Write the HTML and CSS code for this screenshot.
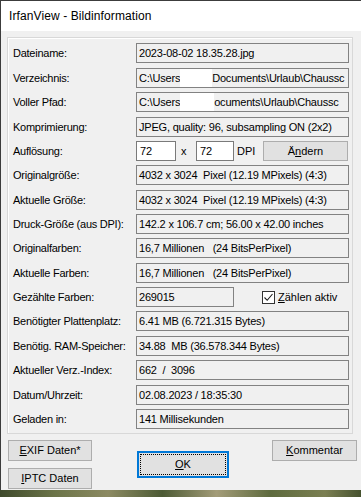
FILE: index.html
```html
<!DOCTYPE html>
<html lang="de">
<head>
    <meta charset="UTF-8">
    <meta name="viewport" content="width=device-width, initial-scale=1.0">
    <title>IrfanView - Bildinformation</title>
    <link rel="stylesheet" href="styles.css">
</head>

<body>
    <div class="window">
        <div class="titlebar">IrfanView - Bildinformation</div>
        <div class="dialog">
            <div class="frame">
                <div class="row">
                    <span class="label">Dateiname:</span>
                    <span class="field">2023-08-02 18.35.28.jpg</span>
                </div>
                <div class="row">
                    <span class="label">Verzeichnis:</span>
                    <span class="field">C:\Users<span class="hidden"></span>Documents\Urlaub\Chaussc</span>
                </div>
                <div class="row">
                    <span class="label">Voller Pfad:</span>
                    <span class="field">C:\Users<span class="hidden wide"></span>ocuments\Urlaub\Chaussc</span>
                </div>
                <div class="row">
                    <span class="label">Komprimierung:</span>
                    <span class="field">JPEG, quality: 96, subsampling ON (2x2)</span>
                </div>
                <div class="row">
                    <span class="label">Auflösung:</span>
                    <div class="dpi">
                        <span class="input">72</span>
                        <span class="times">x</span>
                        <span class="input">72</span>
                        <span class="unit">DPI</span>
                        <span class="button">Ä<u>n</u>dern</span>
                    </div>
                </div>
                <div class="row">
                    <span class="label">Originalgröße:</span>
                    <span class="field">4032 x 3024&nbsp; Pixel (12.19 MPixels) (4:3)</span>
                </div>
                <div class="row">
                    <span class="label">Aktuelle Größe:</span>
                    <span class="field">4032 x 3024&nbsp; Pixel (12.19 MPixels) (4:3)</span>
                </div>
                <div class="row">
                    <span class="label">Druck-Größe (aus DPI):</span>
                    <span class="field">142.2 x 106.7 cm; 56.00 x 42.00 inches</span>
                </div>
                <div class="row">
                    <span class="label">Originalfarben:</span>
                    <span class="field">16,7 Millionen&nbsp;&nbsp; (24 BitsPerPixel)</span>
                </div>
                <div class="row">
                    <span class="label">Aktuelle Farben:</span>
                    <span class="field">16,7 Millionen&nbsp;&nbsp; (24 BitsPerPixel)</span>
                </div>
                <div class="row">
                    <span class="label">Gezählte Farben:</span>
                    <div class="count">
                        <span class="field short">269015</span>
                        <span class="checkbox">
                            <svg width="11" height="11" viewBox="0 0 11 11">
                                <path d="M1.5 5.5 L4.2 8.3 L9.5 2" fill="none" stroke="#1a1a1a" stroke-width="1.1"/>
                            </svg>
                        </span>
                        <span class="check-label"><u>Z</u>ählen aktiv</span>
                    </div>
                </div>
                <div class="row">
                    <span class="label">Benötigter Plattenplatz:</span>
                    <span class="field">6.41 MB (6.721.315 Bytes)</span>
                </div>
                <div class="row">
                    <span class="label">Benötig. RAM-Speicher:</span>
                    <span class="field">34.88&nbsp; MB (36.578.344 Bytes)</span>
                </div>
                <div class="row">
                    <span class="label">Aktueller Verz.-Index:</span>
                    <span class="field">662&nbsp; /&nbsp; 3096</span>
                </div>
                <div class="row">
                    <span class="label">Datum/Uhrzeit:</span>
                    <span class="field">02.08.2023 / 18:35:30</span>
                </div>
                <div class="row">
                    <span class="label">Geladen in:</span>
                    <span class="field">141 Millisekunden</span>
                </div>
            </div>

            <div class="actions">
                <div class="side">
                    <span class="button small"><u>E</u>XIF Daten*</span>
                    <span class="button small"><u>I</u>PTC Daten</span>
                </div>
                <span class="button ok"><u>O</u>K</span>
                <span class="button small comment"><u>K</u>ommentar</span>
            </div>
        </div>
    </div>
    <div class="backdrop"></div>
</body>

</html>
```

FILE: styles.css
```css
* {
    margin: 0;
    padding: 0;
    box-sizing: border-box;
}

body {
    width: 361px;
    height: 497px;
    overflow: hidden;
    background-color: #f0f0f0;
    font-family: "Liberation Sans", Arial, sans-serif;
    font-size: 11px;
    color: #000;
}

.window {
    border-top: 1px solid #3c3c3c;
    border-left: 1px solid #3c3c3c;
    height: 490px;
}

.titlebar {
    height: 30px;
    line-height: 30px;
    padding-left: 8px;
    background-color: #fff;
    font-size: 12px;
    letter-spacing: 0.1px;
}

.dialog {
    background-color: #f0f0f0;
    height: 459px;
    padding: 6px 0 0 6px;
}

.frame {
    width: 346px;
    border: 1px solid #d8d8d8;
    box-shadow: inset 1px 1px 0 #fff;
    padding: 3.3px 3px 1.8px 5px;
}

.row {
    display: grid;
    grid-template-columns: 123px 213px;
    align-items: center;
    height: 24.37px;
}

.label {
    letter-spacing: -0.25px;
    white-space: nowrap;
}

.field {
    display: block;
    height: 20px;
    line-height: 18px;
    padding-left: 2px;
    border: 1px solid #828282;
    background-color: #f0f0f0;
    white-space: nowrap;
    overflow: hidden;
    letter-spacing: -0.2px;
}

.hidden {
    display: inline-block;
    width: 32px;
    height: 18px;
    vertical-align: top;
    background-color: #fff;
}

.hidden.wide {
    width: 34px;
}

.dpi {
    display: grid;
    grid-template-columns: 40px 20px 38px 29px 85px;
    align-items: center;
}

.input {
    height: 20px;
    line-height: 18px;
    padding-left: 3px;
    border: 1px solid #7a7a7a;
    background-color: #fff;
}

.times {
    padding-left: 5px;
}

.unit {
    padding-left: 3px;
}

.button {
    display: flex;
    align-items: center;
    justify-content: center;
    height: 20px;
    border: 1px solid #adadad;
    background-color: #e1e1e1;
    white-space: nowrap;
}

.count {
    display: flex;
    align-items: center;
}

.field.short {
    width: 98px;
}

.checkbox {
    width: 13px;
    height: 13px;
    margin-left: 28px;
    border: 1px solid #333;
    background-color: #fff;
}

.checkbox svg {
    display: block;
}

.check-label {
    margin-left: 3px;
}

.actions {
    display: flex;
    align-items: flex-start;
    margin-top: 6px;
}

.side {
    display: flex;
    flex-direction: column;
    gap: 7px;
    margin-left: 1px;
}

.button.small {
    width: 84px;
    height: 21px;
}

.button.ok {
    width: 92px;
    height: 27px;
    margin: 11px 0 0 45px;
    border: 2px solid #0078d7;
    outline: 1px dotted #000;
    outline-offset: -4px;
}

.button.comment {
    width: 85px;
    margin-left: 43px;
}

.backdrop {
    height: 7px;
    background: linear-gradient(90deg, #3f4a2c 0%, #6b7448 15%, #8c8a62 30%, #4c5a34 45%, #a39c78 60%, #5d6a3d 75%, #7b7f52 90%, #46522f 100%);
}
```
